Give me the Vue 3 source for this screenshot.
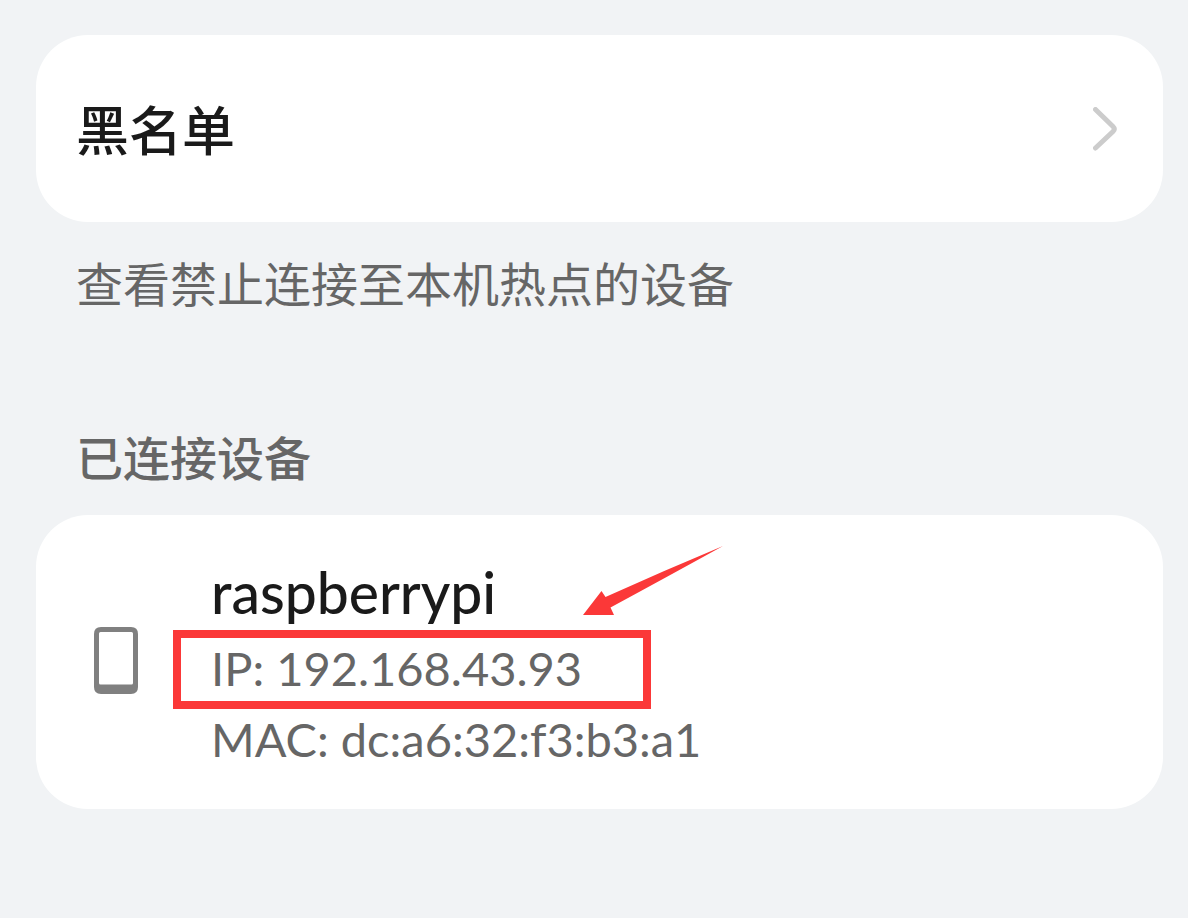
<script setup>
const devices = [
  { name: 'raspberrypi', ip: '192.168.43.93', mac: 'dc:a6:32:f3:b3:a1', marked: true },
]
</script>

<template>
  <main class="page">
    <button class="card blacklist" type="button" aria-describedby="blacklist-hint">
      <span>黑名单</span>
      <svg class="chevron" viewBox="0 0 24 44" aria-hidden="true">
        <path d="M2.500 2.500 L20 19.500 Q22.500 22 20 24.500 L2.500 41" />
      </svg>
    </button>
    <p id="blacklist-hint" class="hint">查看禁止连接至本机热点的设备</p>

    <h2 class="heading">已连接设备</h2>
    <ul class="card devices">
      <li v-for="device in devices" :key="device.mac" class="device">
        <svg class="phone" viewBox="0 0 44 72" aria-hidden="true">
          <path
            fill-rule="evenodd"
            d="M7 0H37Q44 0 44 7V60Q44 67 37 67H7Q0 67 0 60V7Q0 0 7 0ZM6.500 5Q5 5 5 6.500V56Q5 57.500 6.500 57.500H37.500Q39 57.500 39 56V6.500Q39 5 37.500 5Z"
          />
        </svg>
        <div class="info">
          <h3 class="name">{{ device.name }}</h3>
          <p class="line">
            IP: {{ device.ip }}
            <span v-if="device.marked" class="frame"></span>
            <svg v-if="device.marked" class="arrow" viewBox="0 0 140 70" aria-hidden="true">
              <path d="M0 69 L18.500 45 L22.500 51 Q80 25 140 0 Q82 32 27.500 61.500 L31 69 Z" />
            </svg>
          </p>
          <p class="line">MAC: {{ device.mac }}</p>
        </div>
      </li>
    </ul>
  </main>
</template>

<style>
body {
  margin: 0;
  background: #f1f3f5;
}
</style>

<style scoped>
.page {
  box-sizing: border-box;
  min-height: 100vh;
  padding: 35px 25px 35px 36px;
  background: #f1f3f5;
  color: #666;
  font-family: Lato, "Noto Sans CJK SC", sans-serif;
}

.card {
  box-sizing: border-box;
  width: 100%;
  margin: 0;
  border: 0;
  border-radius: 52px;
  background: #fff;
}

.blacklist {
  display: flex;
  align-items: center;
  justify-content: space-between;
  padding: 56px 46px 56px 40px;
  color: #1a1a1a;
  font-family: "Noto Sans CJK SC", sans-serif;
  font-size: 53px;
  font-weight: 500;
  line-height: 75px;
  text-align: left;
  cursor: pointer;
}

.chevron {
  width: 24px;
  height: 44px;
  fill: none;
  stroke: #ccc;
  stroke-width: 5;
  stroke-linecap: round;
}

.hint,
.heading {
  margin: 0;
  padding: 0 40px;
  font-family: "Noto Sans CJK SC", sans-serif;
  font-size: 47px;
  line-height: 70px;
}

.hint {
  padding-top: 25px;
  font-weight: 400;
}

.heading {
  padding-top: 104px;
  padding-bottom: 24px;
  font-weight: 500;
}

.devices {
  padding: 36px 58px 34px;
  list-style: none;
}

.device {
  display: flex;
  align-items: center;
  gap: 73px;
}

.phone {
  flex: none;
  width: 44px;
  height: 72px;
  fill: #808080;
}

.name,
.line {
  margin: 0;
}

.name {
  color: #1a1a1a;
  font-size: 57px;
  font-weight: 500;
  line-height: 82px;
}

.line {
  position: relative;
  width: fit-content;
  font-size: 47px;
  line-height: 71px;
}

.frame {
  position: absolute;
  inset: -3px -69px -5px -38px;
  border: 8px solid #fb3838;
}

.arrow {
  position: absolute;
  right: -141px;
  bottom: 88px;
  width: 140px;
  height: 70px;
  fill: #fb3838;
}
</style>
